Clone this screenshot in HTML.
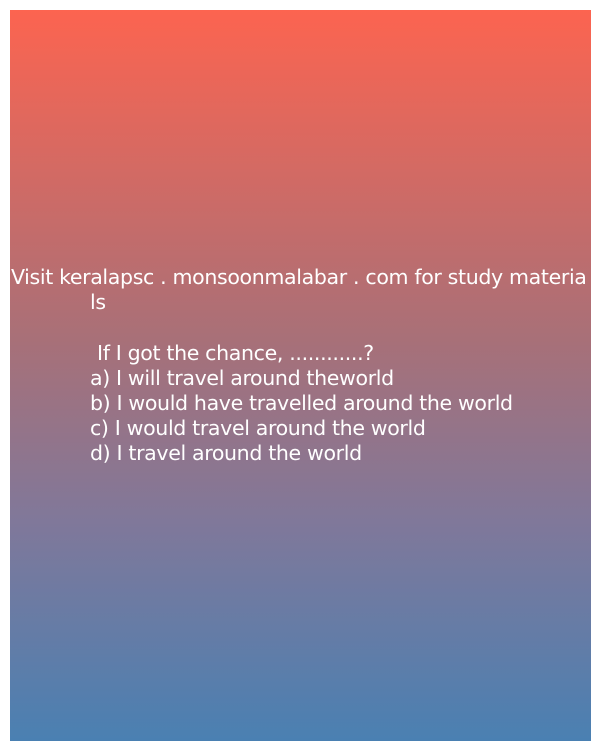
<!DOCTYPE html>
<html><head><style>
html,body{margin:0;padding:0;background:#fff;width:600px;height:750px;overflow:hidden}
.box{position:absolute;left:10px;top:10px;width:581px;height:731px;background:linear-gradient(to bottom,#fc6450 0%,#a87078 45%,#80789a 70%,#4a80b2 100%)}
.t{position:absolute;color:#fff;font-family:"DejaVu Sans Condensed","DejaVu Sans","Liberation Sans",sans-serif;font-stretch:condensed;font-size:20px;line-height:25px;white-space:pre;letter-spacing:-0.3px;transform:scaleX(1.14);transform-origin:0 0}
</style></head><body>
<div class="box"></div>
<div class="t" style="left:11px;top:265px">Visit keralapsc . monsoonmalabar . com for study materia</div>
<div class="t" style="left:90px;top:290px">ls</div>
<div class="t" style="left:97px;top:341px">If I got the chance, ............?</div>
<div class="t" style="left:90px;top:366px">a) I will travel around theworld</div>
<div class="t" style="left:90px;top:391px">b) I would have travelled around the world</div>
<div class="t" style="left:90px;top:416px">c) I would travel around the world</div>
<div class="t" style="left:90px;top:441px">d) I travel around the world</div>
</body></html>
